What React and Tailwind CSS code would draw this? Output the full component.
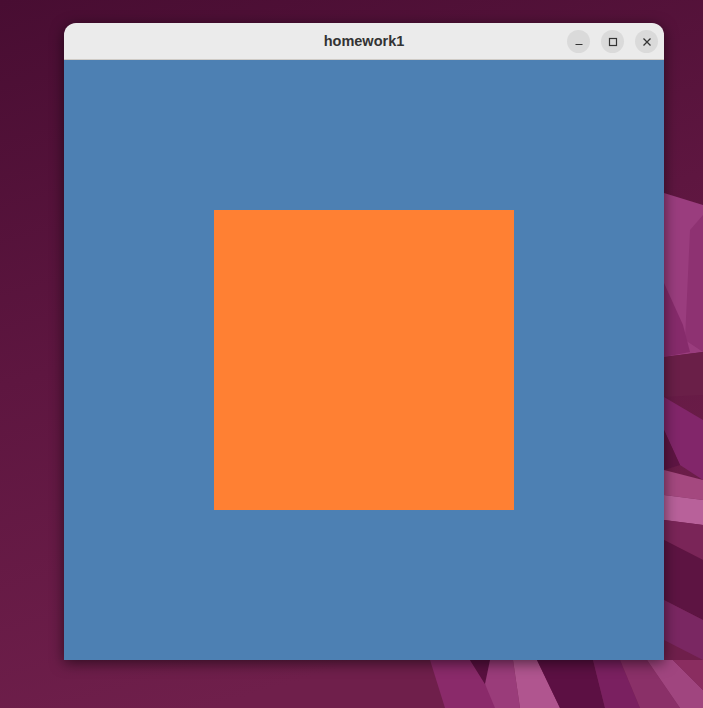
import React from "react";

// wallpaper shards, drawn behind the window
function Wallpaper() {
  return (
    <svg className="absolute inset-0" width="703" height="708" viewBox="0 0 703 708">
      <defs>
        <linearGradient id="bg" x1="0" y1="0" x2="0.3" y2="1">
          <stop offset="0" stopColor="#480d32" />
          <stop offset="0.5" stopColor="#5e1640" />
          <stop offset="1" stopColor="#6f1f4b" />
        </linearGradient>
      </defs>
      <rect width="703" height="708" fill="url(#bg)" />
      {/* right side shards */}
      <polygon points="664,193 703,205 703,352 664,357" fill="#9a3d7e" />
      <polygon points="690,230 703,215 703,352 685,340" fill="#8e3272" />
      <polygon points="664,283 683,325 690,352 664,357" fill="#862b6b" />
      <polygon points="664,357 703,352 703,395 664,397" fill="#6a1f48" />
      <polygon points="664,397 703,420 703,480 680,465 664,430" fill="#82266a" />
      <polygon points="664,430 680,465 664,470" fill="#5e1543" />
      <polygon points="664,470 703,480 703,500 664,495" fill="#a4487f" />
      <polygon points="664,495 703,500 703,525 664,520" fill="#b8619a" />
      <polygon points="664,520 703,525 703,560 664,540" fill="#7a2558" />
      <polygon points="664,540 703,560 703,620 664,600" fill="#5d1442" />
      <polygon points="664,600 703,620 703,660 664,640" fill="#7a2762" />
      {/* bottom shards */}
      <polygon points="430,660 470,660 500,708 445,708" fill="#8a2a6a" />
      <polygon points="470,660 490,660 500,690 485,684" fill="#5a1040" />
      <polygon points="490,660 513,660 520,708 495,708 485,684" fill="#9a3c7a" />
      <polygon points="513,660 537,660 560,708 520,708" fill="#b0558f" />
      <polygon points="537,660 593,660 605,708 560,708" fill="#5c1043" />
      <polygon points="593,660 620,660 640,708 605,708" fill="#7a2060" />
      <polygon points="620,660 647,660 680,708 640,708" fill="#8a3068" />
      <polygon points="647,660 673,660 703,690 703,708 680,708" fill="#a0457f" />
      <polygon points="673,660 703,660 703,690" fill="#8a2d60" />
    </svg>
  );
}

function CircleButton({ children }) {
  return (
    <div className="w-[23px] h-[23px] rounded-full bg-[#dadada] flex items-center justify-center">
      {children}
    </div>
  );
}

export default function App() {
  return (
    <div className="relative w-[703px] h-[708px] overflow-hidden">
      <Wallpaper />
      <div className="relative pt-[23px] pl-[64px]">
        <div className="w-[600px] rounded-t-[12px] overflow-hidden shadow-[0_3px_14px_rgba(0,0,0,0.55)]">
          {/* title bar */}
          <div className="relative h-[37px] bg-[#ebebeb] border-b border-[#cfcbc6] flex items-center justify-center">
            <span
              className="text-[14.5px] font-bold text-[#333333] leading-none"
              style={{ fontFamily: '"Liberation Sans", Arial, sans-serif' }}
            >
              homework1
            </span>
            <div className="absolute right-[6px] top-[7px] flex gap-[11px]">
              <CircleButton>
                <svg width="10" height="10" viewBox="0 0 10 10">
                  <path d="M1.5 7.5h7" stroke="#333" strokeWidth="1.2" />
                </svg>
              </CircleButton>
              <CircleButton>
                <svg width="10" height="10" viewBox="0 0 10 10">
                  <rect x="1.5" y="1.5" width="7" height="7" fill="none" stroke="#333" strokeWidth="1.2" />
                </svg>
              </CircleButton>
              <CircleButton>
                <svg width="10" height="10" viewBox="0 0 10 10">
                  <path d="M1.5 1.5l7 7M8.5 1.5l-7 7" stroke="#333" strokeWidth="1.3" />
                </svg>
              </CircleButton>
            </div>
          </div>
          {/* gl canvas */}
          <div className="h-[600px] bg-[#4d80b3] flex items-center justify-center">
            <div className="w-[300px] h-[300px] bg-[#ff8033]" />
          </div>
        </div>
      </div>
    </div>
  );
}
